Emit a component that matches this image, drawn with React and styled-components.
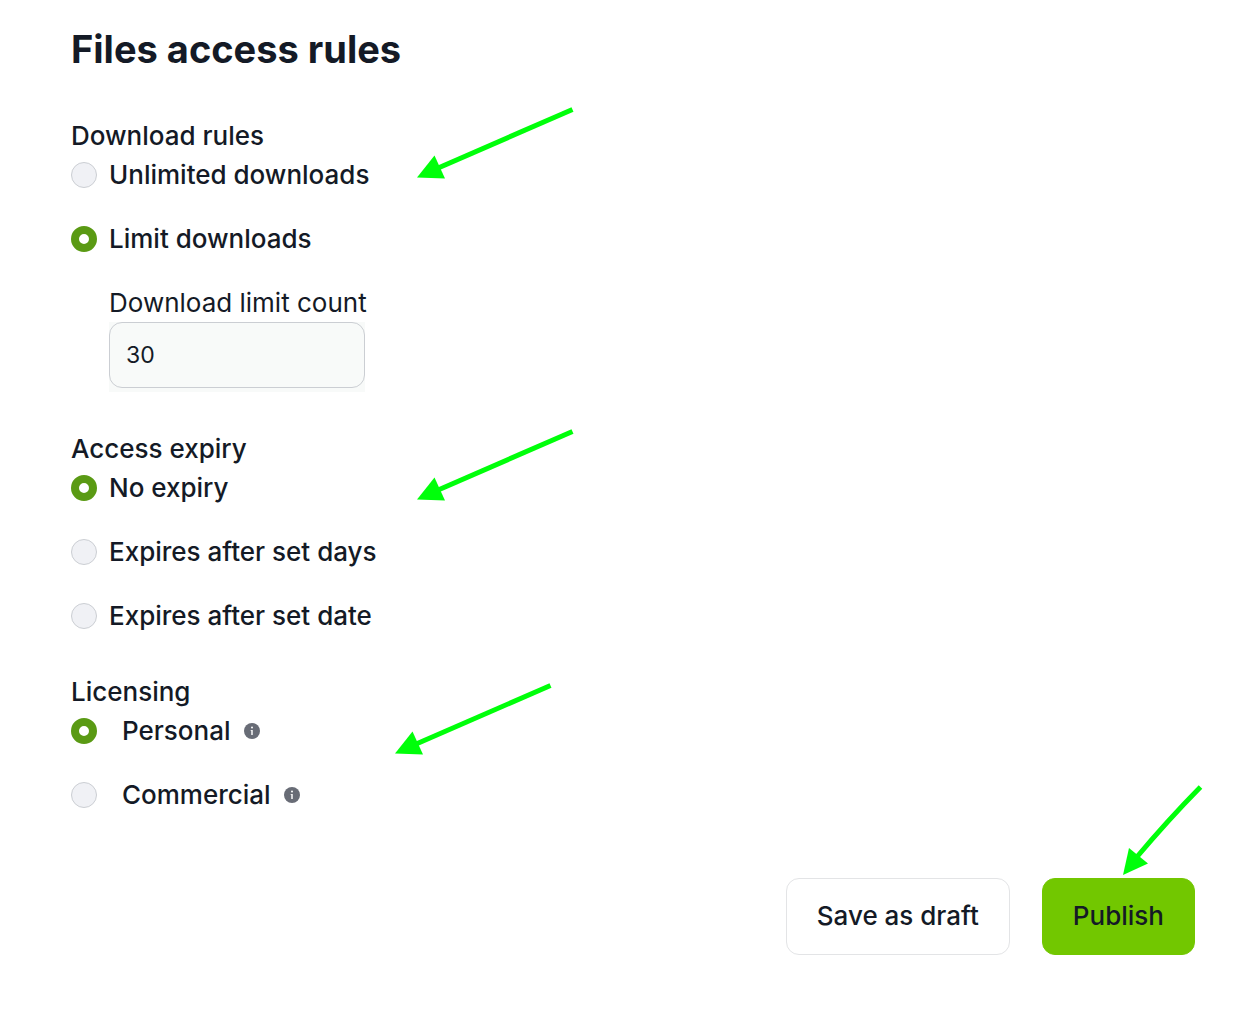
import React, { useState } from "react";
import styled, { createGlobalStyle } from "styled-components";

const colors = {
  text: "#141a26",
  radio: "#5a9a14",
  publish: "#72c700",
  arrow: "#00ff0a",
  border: "#cbced3",
  muted: "#686c76",
};

const InfoIcon = ({ label }) => (
  <InfoSvg viewBox="0 0 16 16" role="img" aria-label={label}>
    <circle cx="8" cy="8" r="8" fill={colors.muted} />
    <circle cx="8" cy="4.600" r="1" fill="#fff" />
    <path
      d="M6.700 7H8.800V12H7.200V8H6.700Z"
      fill="#fff"
      fillOpacity="0.9"
    />
  </InfoSvg>
);

const GroupArrow = ({ top, left }) => (
  <ArrowSvg $top={top} $left={left} width="160" height="80" aria-hidden="true">
    <path
      d="M157.5 4.5Q92 33 22 63.500"
      fill="none"
      stroke={colors.arrow}
      strokeWidth="5"
    />
    <path d="M2 72.500L19.500 50.500L30 73.500Z" fill={colors.arrow} />
  </ArrowSvg>
);

const PublishArrow = () => (
  <ArrowSvg $top={-94} $left={79} width="84" height="94" aria-hidden="true">
    <path
      d="M79.500 3Q47 36 15 74"
      fill="none"
      stroke={colors.arrow}
      strokeWidth="5"
    />
    <path d="M2 91L8 64L27 79.500Z" fill={colors.arrow} />
  </ArrowSvg>
);

const App = () => {
  const [downloads, setDownloads] = useState("limit");
  const [limit, setLimit] = useState("30");
  const [expiry, setExpiry] = useState("none");
  const [license, setLicense] = useState("personal");

  const renderRadio = (name, current, onChange, value, label) => (
    <RadioLabel>
      <Radio
        type="radio"
        name={name}
        value={value}
        checked={current === value}
        onChange={() => onChange(value)}
      />
      {label}
    </RadioLabel>
  );

  return (
    <>
      <GlobalStyle />
      <Form onSubmit={(e) => e.preventDefault()}>
        <Heading>Files access rules</Heading>
        <Groups>
          <Group>
            <Legend>Download rules</Legend>
            <Options>
              {renderRadio("downloads", downloads, setDownloads, "unlimited", "Unlimited downloads")}
              {renderRadio("downloads", downloads, setDownloads, "limit", "Limit downloads")}
              <LimitField>
                <FieldLabel htmlFor="limit-count">
                  Download limit count
                </FieldLabel>
                <InputWrap>
                  <Input
                    id="limit-count"
                    type="text"
                    inputMode="numeric"
                    value={limit}
                    onChange={(e) => setLimit(e.target.value)}
                  />
                </InputWrap>
              </LimitField>
              <GroupArrow top={-51} left={344} />
            </Options>
          </Group>
          <Group>
            <Legend>Access expiry</Legend>
            <Options>
              {renderRadio("expiry", expiry, setExpiry, "none", "No expiry")}
              {renderRadio("expiry", expiry, setExpiry, "days", "Expires after set days")}
              {renderRadio("expiry", expiry, setExpiry, "date", "Expires after set date")}
              <GroupArrow top={-42} left={344} />
            </Options>
          </Group>
          <Group>
            <Legend>Licensing</Legend>
            <Options>
              <RadioLabel $wide>
                <Radio
                  type="radio"
                  name="license"
                  checked={license === "personal"}
                  onChange={() => setLicense("personal")}
                />
                <LabelText>
                  Personal
                  <InfoIcon label="About the personal license" />
                </LabelText>
              </RadioLabel>
              <RadioLabel $wide>
                <Radio
                  type="radio"
                  name="license"
                  checked={license === "commercial"}
                  onChange={() => setLicense("commercial")}
                />
                <LabelText>
                  Commercial
                  <InfoIcon label="About the commercial license" />
                </LabelText>
              </RadioLabel>
              <GroupArrow top={-31} left={322} />
            </Options>
          </Group>
        </Groups>
        <Actions>
          <Button type="button">Save as draft</Button>
          <PublishWrap>
            <Button type="submit" $primary>
              Publish
            </Button>
            <PublishArrow />
          </PublishWrap>
        </Actions>
      </Form>
    </>
  );
};

export default App;

const GlobalStyle = createGlobalStyle`
  * {
    box-sizing: border-box;
  }
  body {
    margin: 0;
    background: #fff;
    color: ${colors.text};
    font-family: Inter, "Liberation Sans", sans-serif;
    font-size: 26px;
    font-weight: 500;
    line-height: 38px;
  }
`;

const Form = styled.form`
  padding: 20px 59px 72px 71px;
`;

const Heading = styled.h1`
  margin: 0 0 39px;
  font-size: 38px;
  font-weight: 700;
  line-height: 58px;
`;

const Groups = styled.div`
  display: flex;
  flex-direction: column;
  gap: 38px;
`;

const Group = styled.fieldset`
  min-width: 0;
  margin: 0;
  padding: 0;
  border: 0;
`;

const Legend = styled.legend`
  padding: 0;
  margin-bottom: 1px;
`;

const Options = styled.div`
  position: relative;
  display: flex;
  flex-direction: column;
  align-items: flex-start;
  gap: 26px;
`;

const RadioLabel = styled.label`
  display: flex;
  align-items: center;
  gap: ${({ $wide }) => ($wide ? "25px" : "12px")};
  cursor: pointer;
`;

const Radio = styled.input`
  appearance: none;
  flex-shrink: 0;
  width: 26px;
  height: 26px;
  margin: 0;
  border: 1px solid ${colors.border};
  border-radius: 50%;
  background: #f0f1f5;
  cursor: pointer;
  &:checked {
    border: 8px solid ${colors.radio};
    background: #fff;
  }
`;

const LabelText = styled.span`
  display: flex;
  align-items: center;
  gap: 13px;
`;

const InfoSvg = styled.svg`
  width: 16px;
  height: 16px;
`;

const LimitField = styled.div`
  width: 256px;
  margin-left: 38px;
`;

const FieldLabel = styled.label`
  display: block;
  font-weight: 400;
  white-space: nowrap;
`;

const InputWrap = styled.div`
  padding-bottom: 4px;
  background: #f8faf9;
`;

const Input = styled.input`
  display: block;
  width: 100%;
  height: 66px;
  padding: 0 16px;
  border: 1px solid ${colors.border};
  border-radius: 13px;
  background: #f8faf9;
  color: ${colors.text};
  font-family: inherit;
  font-size: 23px;
  font-weight: 400;
`;

const Actions = styled.div`
  display: flex;
  justify-content: flex-end;
  gap: 32px;
  margin-top: 64px;
`;

const PublishWrap = styled.div`
  position: relative;
`;

const Button = styled.button`
  display: block;
  padding: 18px 30px 19px;
  border: 1px solid ${({ $primary }) => ($primary ? colors.publish : "#e3e4e6")};
  border-radius: 13px;
  background: ${({ $primary }) => ($primary ? colors.publish : "#fff")};
  color: ${colors.text};
  font: inherit;
  cursor: pointer;
`;

const ArrowSvg = styled.svg`
  position: absolute;
  top: ${({ $top }) => $top}px;
  left: ${({ $left }) => $left}px;
  pointer-events: none;
`;
